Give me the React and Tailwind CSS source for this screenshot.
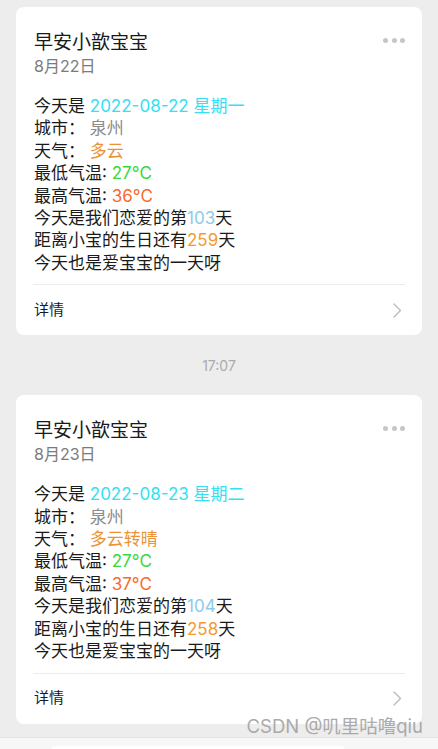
const FONT = {
  fontFamily: '"Inter", "Noto Sans CJK SC", sans-serif',
};

const CARDS = [
  {
    title: "早安小歆宝宝",
    date: "8月22日",
    today: "2022-08-22 星期一",
    city: "泉州",
    weather: "多云",
    low: "27°C",
    high: "36°C",
    love: "103",
    birthday: "259",
  },
  {
    title: "早安小歆宝宝",
    date: "8月23日",
    today: "2022-08-23 星期二",
    city: "泉州",
    weather: "多云转晴",
    low: "27°C",
    high: "37°C",
    love: "104",
    birthday: "258",
  },
];

function Card({ card }) {
  return (
    <div className="mx-4 rounded-[8px] bg-white">
      <div className="relative px-[18px] pt-[23px]">
        <div className="text-[19px] leading-[26px] text-[#1a1a1a]">
          {card.title}
        </div>
        <div className="text-[16px] leading-[20px] text-[#7b7b7b]">
          {card.date}
        </div>
        <div className="absolute right-[17px] top-[31px] flex gap-[3.5px]">
          <span className="h-[5px] w-[5px] rounded-full bg-[#c6c6c6]" />
          <span className="h-[5px] w-[5px] rounded-full bg-[#c6c6c6]" />
          <span className="h-[5px] w-[5px] rounded-full bg-[#c6c6c6]" />
        </div>

        <div className="mt-[19px] text-[17px] leading-[22.4px] text-[#1a1a1a]">
          <div>
            今天是 <span className="text-[#34e0f2]">{card.today}</span>
          </div>
          <div>
            城市： <span className="text-[#8c8c8c]">{card.city}</span>
          </div>
          <div>
            天气： <span className="text-[#eb9236]">{card.weather}</span>
          </div>
          <div>
            最低气温: <span className="text-[#36d93a]">{card.low}</span>
          </div>
          <div>
            最高气温: <span className="text-[#f76a2c]">{card.high}</span>
          </div>
          <div>
            今天是我们恋爱的第<span className="text-[#8ccbea]">{card.love}</span>天
          </div>
          <div>
            距离小宝的生日还有<span className="text-[#f59a30]">{card.birthday}</span>天
          </div>
          <div>今天也是爱宝宝的一天呀</div>
        </div>
      </div>

      <div className="mx-[17px] mt-[10px] border-t border-[#ececec]" />
      <div className="flex h-[50px] items-center justify-between pl-[18px] pr-[20px]">
        <span className="text-[15px] text-[#1a1a1a]">详情</span>
        <svg width="9" height="15" viewBox="0 0 9 15" fill="none">
          <path
            d="M1 1l6.5 6.5L1 14"
            stroke="#b8b8b8"
            strokeWidth="1.3"
            strokeLinecap="round"
            strokeLinejoin="round"
          />
        </svg>
      </div>
    </div>
  );
}

export default function App() {
  return (
    <div
      className="relative flex h-[749px] w-[438px] flex-col overflow-hidden bg-[#ededed]"
      style={FONT}
    >
      <div className="pt-[7px]">
        <Card card={CARDS[0]} />
        <div className="flex h-[60px] items-center justify-center text-[14px] text-[#ababab]">
          17:07
        </div>
        <Card card={CARDS[1]} />
      </div>

      <div className="mt-[13px] flex-1 border-t border-[#e2e2e2] bg-[#f7f7f7] pt-[8px]">
        <div className="ml-[51px] h-[36px] w-[294px] rounded-[5px] bg-white" />
      </div>

      <div className="absolute right-[15px] top-[714px] text-[18.5px] leading-[24px] text-[#a3a3a3] opacity-90">
        CSDN @叽里咕噜qiu
      </div>
    </div>
  );
}
